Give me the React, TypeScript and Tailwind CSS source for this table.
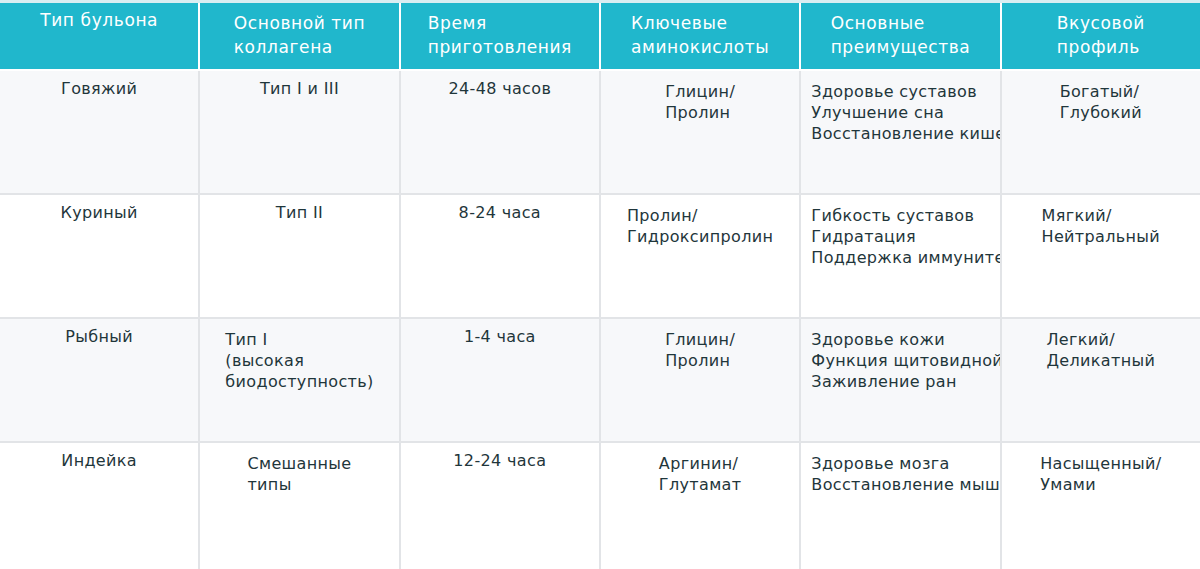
import type { ReactNode } from "react";

type Cell = { lines: string[]; multi?: boolean };

const headers: Cell[] = [
  { lines: ["Тип бульона"] },
  { lines: ["Основной тип", "коллагена"], multi: true },
  { lines: ["Время", "приготовления"], multi: true },
  { lines: ["Ключевые", "аминокислоты"], multi: true },
  { lines: ["Основные", "преимущества"], multi: true },
  { lines: ["Вкусовой", "профиль"], multi: true },
];

type Row = {
  type: string;
  collagen: Cell;
  time: string;
  amino: string[];
  benefits: string[];
  taste: string[];
};

const rows: Row[] = [
  {
    type: "Говяжий",
    collagen: { lines: ["Тип I и III"] },
    time: "24-48 часов",
    amino: ["Глицин/", "Пролин"],
    benefits: ["Здоровье суставов", "Улучшение сна", "Восстановление кишечника"],
    taste: ["Богатый/", "Глубокий"],
  },
  {
    type: "Куриный",
    collagen: { lines: ["Тип II"] },
    time: "8-24 часа",
    amino: ["Пролин/", "Гидроксипролин"],
    benefits: ["Гибкость суставов", "Гидратация", "Поддержка иммунитета"],
    taste: ["Мягкий/", "Нейтральный"],
  },
  {
    type: "Рыбный",
    collagen: { lines: ["Тип I", "(высокая", "биодоступность)"], multi: true },
    time: "1-4 часа",
    amino: ["Глицин/", "Пролин"],
    benefits: ["Здоровье кожи", "Функция щитовидной железы", "Заживление ран"],
    taste: ["Легкий/", "Деликатный"],
  },
  {
    type: "Индейка",
    collagen: { lines: ["Смешанные", "типы"], multi: true },
    time: "12-24 часа",
    amino: ["Аргинин/", "Глутамат"],
    benefits: ["Здоровье мозга", "Восстановление мышц"],
    taste: ["Насыщенный/", "Умами"],
  },
];

function Centered({ lines, multi }: Cell) {
  return (
    <div className={`flex justify-center ${multi ? "pt-[10px]" : "pt-[7px]"}`}>
      <div className="text-left whitespace-nowrap">
        {lines.map((l, i) => (
          <div key={i}>{l}</div>
        ))}
      </div>
    </div>
  );
}

function BodyCell({ bg, children }: { bg: string; children: ReactNode }) {
  return <div className={`${bg} overflow-hidden`}>{children}</div>;
}

export default function App() {
  return (
    <div
      className="w-[1200px] h-[569px] overflow-hidden bg-white border-t-[3px] border-[#d9eef2]"
      style={{ fontFamily: '"DejaVu Sans", sans-serif' }}
    >
      <div className="grid grid-cols-6 gap-x-[2px] h-[66px] text-white text-[17px] leading-[24px] tracking-[0.6px]">
        {headers.map((h, i) => (
          <div key={i} className="bg-[#20b7cc] flex justify-center">
            <div className={`text-left whitespace-nowrap ${h.multi ? "pt-[8px]" : "pt-[5px]"}`}>
              {h.lines.map((l, j) => (
                <div key={j}>{l}</div>
              ))}
            </div>
          </div>
        ))}
      </div>
      <div className="h-[2px]" />
      <div className="text-[16px] leading-[21px] tracking-[0.35px] text-[#1f363b]">
        {rows.map((r, i) => {
          const bg = i % 2 === 0 ? "bg-[#f7f8fa]" : "bg-white";
          const h = i === rows.length - 1 ? "h-[130px]" : "h-[124px]";
          return (
            <div key={i} className={`grid grid-cols-6 gap-x-[2px] ${h} pb-[2px] bg-[#e2e4e7]`}>
              <BodyCell bg={bg}>
                <Centered lines={[r.type]} />
              </BodyCell>
              <BodyCell bg={bg}>
                <Centered {...r.collagen} />
              </BodyCell>
              <BodyCell bg={bg}>
                <Centered lines={[r.time]} />
              </BodyCell>
              <BodyCell bg={bg}>
                <Centered lines={r.amino} multi />
              </BodyCell>
              <BodyCell bg={bg}>
                <div className="pt-[10px] pl-[10px] whitespace-nowrap">
                  {r.benefits.map((b, j) => (
                    <div key={j}>{b}</div>
                  ))}
                </div>
              </BodyCell>
              <BodyCell bg={bg}>
                <Centered lines={r.taste} multi />
              </BodyCell>
            </div>
          );
        })}
      </div>
    </div>
  );
}
